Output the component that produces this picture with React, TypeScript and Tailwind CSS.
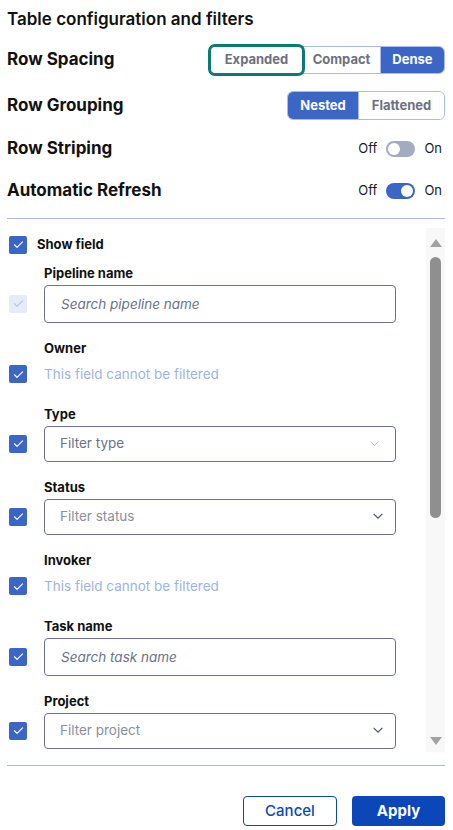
import { useState } from "react";

const BLUE = "bg-[#3c66c6]";

function Check({ disabled = false }: { disabled?: boolean }) {
  return (
    <span
      className={`flex h-[18px] w-[18px] shrink-0 items-center justify-center rounded-[2px] ${
        disabled ? "bg-[#e5ebf8]" : BLUE
      }`}
    >
      <svg viewBox="0 0 16 16" className="h-[13px] w-[13px]" fill="none">
        <path
          d="M3 8.3l3.2 3.2L13 4.8"
          stroke={disabled ? "#b3c3e9" : "#ffffff"}
          strokeWidth="1.4"
          strokeLinecap="round"
          strokeLinejoin="round"
        />
      </svg>
    </span>
  );
}

function Chevron({ light = false }: { light?: boolean }) {
  return light ? (
    <svg viewBox="0 0 12 8" className="mr-[4px] h-[6px] w-[11px]" fill="none">
      <path d="M1 1l5 5 5-5" stroke="#a7adba" strokeWidth="1" />
    </svg>
  ) : (
    <svg viewBox="0 0 12 8" className="h-[7px] w-[12px]" fill="none">
      <path d="M1 1l5 5 5-5" stroke="#4b5574" strokeWidth="1.4" />
    </svg>
  );
}

function Toggle({ on }: { on: boolean }) {
  return (
    <div className="flex items-center text-[13px] text-[#1a1a1a]">
      <span>Off</span>
      <span
        className={`mx-[9px] flex h-[16px] w-[29px] items-center rounded-full px-[2px] ${
          on ? "justify-end bg-[#3c66c6]" : "justify-start bg-[#a2acbe]"
        }`}
      >
        <span className="h-[12px] w-[12px] rounded-full bg-white" />
      </span>
      <span>On</span>
    </div>
  );
}

type Field =
  | { label: string; kind: "search"; placeholder: string; disabled?: boolean }
  | { label: string; kind: "select"; placeholder: string; light?: boolean }
  | { label: string; kind: "none" };

const FIELDS: Field[] = [
  { label: "Pipeline name", kind: "search", placeholder: "Search pipeline name", disabled: true },
  { label: "Owner", kind: "none" },
  { label: "Type", kind: "select", placeholder: "Filter type", light: true },
  { label: "Status", kind: "select", placeholder: "Filter status" },
  { label: "Invoker", kind: "none" },
  { label: "Task name", kind: "search", placeholder: "Search task name" },
  { label: "Project", kind: "select", placeholder: "Filter project" },
];

const SPACINGS = [
  { id: "Expanded", w: "w-[91px]" },
  { id: "Compact", w: "w-[79px]" },
  { id: "Dense", w: "w-[63px]" },
];

const GROUPINGS = [
  { id: "Nested", w: "w-[70px]" },
  { id: "Flattened", w: "w-[86px]" },
];

export default function App() {
  const [spacing, setSpacing] = useState("Dense");
  const [grouping, setGrouping] = useState("Nested");

  return (
    <div className="h-[830px] w-[453px] overflow-hidden bg-white pl-[7px] pr-[8px] text-[#111111] [font-family:Inter,'Liberation_Sans',sans-serif]">
      {/* Header */}
      <h1 className="pt-[7px] text-[17px] font-semibold leading-[24px]">Table configuration and filters</h1>

      <div className="mt-[15px] flex h-[28px] items-center justify-between">
        <span className="text-[17px] font-bold">Row Spacing</span>
        <div className="flex h-[28px] rounded-[6px] border border-[#a9bbe6] text-[13px] font-bold">
          {SPACINGS.map((s, i) => (
            <button
              key={s.id}
              onClick={() => setSpacing(s.id)}
              className={`flex items-center justify-center ${s.w} ${
                spacing === s.id ? "bg-[#3c66c6] text-white" : "bg-white text-[#6c7180]"
              } ${i === 0 ? "relative z-10 rounded-[4px] ring-[3px] ring-[#0b7b72]" : ""} ${
                i === 1 ? "border-x border-[#a9bbe6]" : ""
              } ${i === 2 ? "rounded-r-[5px]" : ""}`}
            >
              {s.id}
            </button>
          ))}
        </div>
      </div>

      <div className="mt-[17px] flex h-[29px] items-center justify-between">
        <span className="text-[17px] font-bold">Row Grouping</span>
        <div className="flex h-[29px] overflow-hidden rounded-[6px] border border-[#a9bbe6] text-[13px] font-bold">
          {GROUPINGS.map((s, i) => (
            <button
              key={s.id}
              onClick={() => setGrouping(s.id)}
              className={`flex items-center justify-center ${s.w} ${
                grouping === s.id ? "bg-[#3c66c6] text-white" : "bg-white text-[#6c7180]"
              } ${i === 1 ? "border-l border-[#a9bbe6]" : ""}`}
            >
              {s.id}
            </button>
          ))}
        </div>
      </div>

      <div className="mt-[15px] flex h-[28px] items-center justify-between">
        <span className="text-[17px] font-bold">Row Striping</span>
        <div className="pr-[3px]">
          <Toggle on={false} />
        </div>
      </div>

      <div className="mt-[14px] flex h-[28px] items-center justify-between">
        <span className="text-[17px] font-bold">Automatic Refresh</span>
        <div className="pr-[3px]">
          <Toggle on />
        </div>
      </div>

      <div className="mt-[13px] h-px bg-[#a9bbe6]" />

      {/* Field list */}
      <div className="mt-[9px] flex h-[524px] overflow-hidden">
        <div className="flex-1 pt-[7px]">
          <div className="flex items-center gap-[10px] pl-[2px]">
            <Check />
            <span className="text-[13px] font-bold">Show field</span>
          </div>

          <div className="mt-[10px] flex flex-col gap-[17px]">
            {FIELDS.map((f) => (
              <div key={f.label}>
                <div className="pl-[37px] text-[13px] font-bold leading-[16px]">{f.label}</div>
                <div className="mt-[4px] flex items-center gap-[17px] pl-[2px]">
                  <Check disabled={f.kind === "search" && f.disabled} />
                  {f.kind === "none" ? (
                    <div className="flex h-[29px] items-center text-[13.5px] text-[#9eb3e6]">
                      This field cannot be filtered
                    </div>
                  ) : f.kind === "search" ? (
                    <input
                      placeholder={f.placeholder}
                      className="h-[38px] w-[352px] rounded-[4px] border border-[#6a7490] px-[16px] text-[13.5px] italic placeholder-[#6b7285] focus:outline-none"
                    />
                  ) : (
                    <div className="flex h-[36px] w-[352px] items-center justify-between rounded-[4px] border border-[#6a7490] pl-[15px] pr-[11px] text-[13.5px]">
                      <span className={f.light ? "text-[#6b7285]" : "text-[#8a8f9b]"}>{f.placeholder}</span>
                      <Chevron light={f.light} />
                    </div>
                  )}
                </div>
              </div>
            ))}
          </div>
        </div>

        {/* Scrollbar */}
        <div className="flex w-[19px] flex-col items-center bg-[#f8f8f8] pt-[11px]">
          <svg viewBox="0 0 12 8" className="h-[8px] w-[12px]">
            <path d="M6 0L12 8H0z" fill="#a3a3a3" />
          </svg>
          <div className="mt-[10px] h-[261px] w-[11px] rounded-full bg-[#8f8f8f]" />
          <div className="flex-1" />
          <svg viewBox="0 0 12 8" className="mb-[7px] h-[8px] w-[12px]">
            <path d="M0 0h12L6 8z" fill="#a3a3a3" />
          </svg>
        </div>
      </div>

      <div className="mt-[13px] h-px bg-[#a9bbe6]" />

      {/* Actions */}
      <div className="mt-[30px] flex justify-end gap-[15px]">
        <button className="h-[30px] w-[94px] rounded-[4px] border border-[#0b47b8] bg-white text-[15px] font-medium text-[#0b47b8]">
          Cancel
        </button>
        <button className="h-[30px] w-[93px] rounded-[4px] bg-[#0b47b8] text-[15px] font-bold text-white">
          Apply
        </button>
      </div>
    </div>
  );
}
